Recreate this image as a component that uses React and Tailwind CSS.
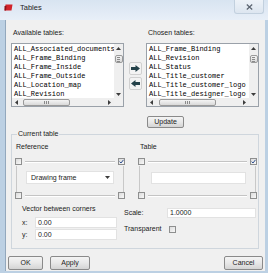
import React from 'react';

const AVAILABLE = [
  'ALL_Associated_documents',
  'ALL_Frame_Binding',
  'ALL_Frame_Inside',
  'ALL_Frame_Outside',
  'ALL_Location_map',
  'ALL_Revision',
];

const CHOSEN = [
  'ALL_Frame_Binding',
  'ALL_Revision',
  'ALL_Status',
  'ALL_Title_customer',
  'ALL_Title_customer_logo',
  'ALL_Title_designer_logo',
];

const UI = "font-['Liberation_Sans',Arial,sans-serif]";

function Tri({ dir }) {
  const pts = {
    up: '0,3 2.5,0 5,3',
    down: '0,0 5,0 2.5,3',
    left: '3,0 3,5 0,2.5',
    right: '0,0 0,5 3,2.5',
  }[dir];
  const vertical = dir === 'up' || dir === 'down';
  return (
    <svg width={vertical ? 5 : 3} height={vertical ? 3 : 5} viewBox={vertical ? '0 0 5 3' : '0 0 3 5'}>
      <polygon points={pts} fill="#3c3c3c" />
    </svg>
  );
}

function Thumb({ className, vertical }) {
  const grip = vertical ? 'w-[3px] h-[1px]' : 'w-[1px] h-[3px]';
  return (
    <div
      className={`flex items-center justify-center gap-[1px] border border-[#9a9a9a] rounded-[2px] bg-linear-to-b from-[#f4f4f4] to-[#d9d9d9] ${
        vertical ? 'flex-col' : ''
      } ${className}`}
    >
      <div className={`${grip} bg-[#8a8a8a]`} />
      <div className={`${grip} bg-[#8a8a8a]`} />
      <div className={`${grip} bg-[#8a8a8a]`} />
    </div>
  );
}

function ListBox({ items, thumbLeft, thumbWidth }) {
  return (
    <div className="h-[64px] border border-[#9aa1a9] bg-white flex flex-col">
      <div className="flex h-[54px]">
        <div className="flex-1 overflow-hidden pl-[2px] pt-[1px] font-['Liberation_Mono','Courier_New',monospace] text-[7px] leading-[9px] text-black">
          {items.map((t) => (
            <div key={t} className="whitespace-nowrap">
              {t}
            </div>
          ))}
        </div>
        {/* vertical scrollbar */}
        <div className="w-[9px] bg-[#efefef] flex flex-col items-center">
          <div className="h-[8px] flex items-center">
            <Tri dir="up" />
          </div>
          <Thumb vertical className="mt-[3px] w-[8px] h-[8px]" />
          <div className="flex-1" />
          <div className="h-[8px] flex items-center">
            <Tri dir="down" />
          </div>
        </div>
      </div>
      {/* horizontal scrollbar */}
      <div className="h-[8px] flex bg-[#efefef]">
        <div className="w-[9px] flex items-center justify-center">
          <Tri dir="left" />
        </div>
        <div className="flex-1 flex items-center">
          <Thumb className={`h-[7px] ${thumbLeft} ${thumbWidth}`} />
        </div>
        <div className="w-[9px] flex items-center justify-center">
          <Tri dir="right" />
        </div>
        <div className="w-[9px] bg-[#f0f0f0]" />
      </div>
    </div>
  );
}

function CheckBox({ checked }) {
  return (
    <div className="w-[7px] h-[7px] shrink-0 border border-[#8e8f8f] bg-linear-to-br from-[#dcdcdc] to-[#f8f8f8] flex items-center justify-center">
      {checked && (
        <svg width="5" height="5" viewBox="0 0 5 5">
          <path d="M0.6 2.6 L2 4 L4.5 0.8" stroke="#2f4f8f" strokeWidth="1" fill="none" />
        </svg>
      )}
    </div>
  );
}

function Etched({ className = '' }) {
  return <div className={`h-[2px] border-t border-[#c4c4c4] border-b border-b-white ${className}`} />;
}

function WinButton({ children, className = '' }) {
  return (
    <div
      className={`flex items-center justify-center border border-[#8a8a8a] rounded-[2px] bg-linear-to-b from-[#f4f4f4] via-[#e8e8e8] to-[#d4d4d4] text-[7px] text-[#222] ${className}`}
    >
      {children}
    </div>
  );
}

function ArrowButton({ dir }) {
  return (
    <div className="w-[13px] h-[13px] border border-[#d0d0d0] rounded-[2px] bg-[#f3f3f3] flex items-center justify-center">
      <svg width="9" height="7" viewBox="0 0 9 7">
        {dir === 'right' ? (
          <polygon points="0,2 4.5,2 4.5,0 9,3.5 4.5,7 4.5,5 0,5" fill="#24424a" />
        ) : (
          <polygon points="9,2 4.5,2 4.5,0 0,3.5 4.5,7 4.5,5 9,5" fill="#24424a" />
        )}
      </svg>
    </div>
  );
}

function CornerFrame({ checkedTopRight, children }) {
  return (
    <div className="flex flex-col">
      <div className="flex items-center h-[7px]">
        <CheckBox />
        <Etched className="flex-1 mx-[3px]" />
        <CheckBox checked={checkedTopRight} />
      </div>
      <div className="h-[26px] mt-[1px] mx-[1px] border-x border-[#c8c8c8]">{children}</div>
      <div className="flex items-center h-[7px]">
        <CheckBox />
        <Etched className="flex-1 mx-[3px]" />
        <CheckBox />
      </div>
    </div>
  );
}

export default function App() {
  return (
    <div className={`w-[268px] h-[273px] overflow-hidden flex flex-col bg-[#bcd0e3] ${UI}`}>
      {/* title bar */}
      <div className="h-[20px] flex items-start bg-linear-to-b from-[#d8e4f1] to-[#e8eff8]">
        <div className="flex items-center h-[15px] pl-[4px]">
          <svg width="9" height="7" viewBox="0 0 9 7">
            <polygon points="1.5,0.5 8.5,0.5 7.5,6.5 0.5,6.5" fill="#d2232a" />
            <polygon points="0.5,2 2.5,2 2,6.5 0.5,6.5" fill="#8c1218" />
          </svg>
          <span className="ml-[7px] text-[7.5px] text-[#1e1e1e]">Tables</span>
        </div>
        <div className="flex-1" />
        <div className="w-[30px] h-[14px] mr-[4px] border border-t-0 border-[#c2d0de] rounded-b-[3px] bg-linear-to-b from-[#edf2f8] to-[#dde6f0] flex items-center justify-center">
          <svg width="7" height="6" viewBox="0 0 7 6">
            <path d="M0.8 0.5 L6.2 5.5 M6.2 0.5 L0.8 5.5" stroke="#5b6470" strokeWidth="1.2" />
          </svg>
        </div>
      </div>

      {/* body */}
      <div className="h-[251px] ml-[5px] mr-[3px] border-l border-[#93a8bd] bg-[#f0f0f0] flex flex-col text-[7px] leading-[10px] text-[#222]">
        {/* lists */}
        <div className="flex pt-[8px] pl-[5px]">
          <div className="w-[113px] flex flex-col">
            <div className="h-[10px] pl-[2px]">Available tables:</div>
            <div className="mt-[5px]">
              <ListBox items={AVAILABLE} thumbLeft="ml-[2px]" thumbWidth="w-[47px]" />
            </div>
          </div>
          <div className="w-[22px] flex flex-col items-center pt-[34px] gap-[2px]">
            <ArrowButton dir="right" />
            <ArrowButton dir="left" />
          </div>
          <div className="w-[113px] flex flex-col">
            <div className="h-[10px] pl-[2px]">Chosen tables:</div>
            <div className="mt-[5px]">
              <ListBox items={CHOSEN} thumbLeft="ml-[3px]" thumbWidth="w-[57px]" />
            </div>
            <WinButton className="mt-[9px] ml-[1px] w-[37px] h-[12px]">Update</WinButton>
          </div>
        </div>

        {/* current table group */}
        <fieldset className="mt-[1px] ml-[5px] mr-[6px] border border-[#cfd6dd]">
          <legend className="ml-[5px] px-[1px] h-[10px] leading-[10px]">Current table</legend>
          <div className="flex pt-[3px] pl-[3px]">
            <div className="w-[110px] flex flex-col">
              <div className="h-[10px] pl-[1px]">Reference</div>
              <div className="mt-[6px]">
                <CornerFrame checkedTopRight>
                  <div className="mt-[5px] ml-[9px] w-[88px] h-[13px] bg-white border border-[#e2e2e2] flex items-center pl-[4px] pr-[3px]">
                    <span className="flex-1">Drawing frame</span>
                    <Tri dir="down" />
                  </div>
                </CornerFrame>
              </div>
            </div>
            <div className="ml-[13px] w-[119px] flex flex-col">
              <div className="h-[10px] pl-[2px]">Table</div>
              <div className="mt-[6px]">
                <CornerFrame checkedTopRight>
                  <div className="mt-[6px] ml-[11px] w-[95px] h-[12px] bg-white border border-[#e2e2e2]" />
                </CornerFrame>
              </div>
            </div>
          </div>

          <div className="flex pl-[10px] pt-[5px] pb-[8px]">
            <div className="w-[95px] flex flex-col">
              <div className="h-[10px]">Vector between corners</div>
              <div className="mt-[3px] flex items-center h-[11px]">
                <span className="w-[13px]">x:</span>
                <div className="flex-1 h-[11px] bg-white border border-[#e2e2e2] pl-[2px] leading-[9px]">0.00</div>
              </div>
              <div className="mt-[1px] flex items-center h-[11px]">
                <span className="w-[13px]">y:</span>
                <div className="flex-1 h-[11px] bg-white border border-[#e2e2e2] pl-[2px] leading-[9px]">0.00</div>
              </div>
            </div>
            <div className="ml-[7px] w-[132px] flex flex-col pt-[4px]">
              <div className="flex items-center h-[10px]">
                <span className="w-[43px]">Scale:</span>
                <div className="w-[89px] h-[10px] bg-white border border-[#e2e2e2] pl-[2px] leading-[8px]">1.0000</div>
              </div>
              <div className="mt-[6px] flex items-center h-[10px]">
                <span className="w-[45px]">Transparent</span>
                <CheckBox />
              </div>
            </div>
          </div>
        </fieldset>

        {/* bottom buttons */}
        <div className="flex mt-[7px] pl-[2px] pr-[2px]">
          <WinButton className="w-[35px] h-[14px]">OK</WinButton>
          <WinButton className="ml-[7px] w-[40px] h-[14px]">Apply</WinButton>
          <div className="flex-1" />
          <WinButton className="w-[39px] h-[14px]">Cancel</WinButton>
        </div>
      </div>
    </div>
  );
}
